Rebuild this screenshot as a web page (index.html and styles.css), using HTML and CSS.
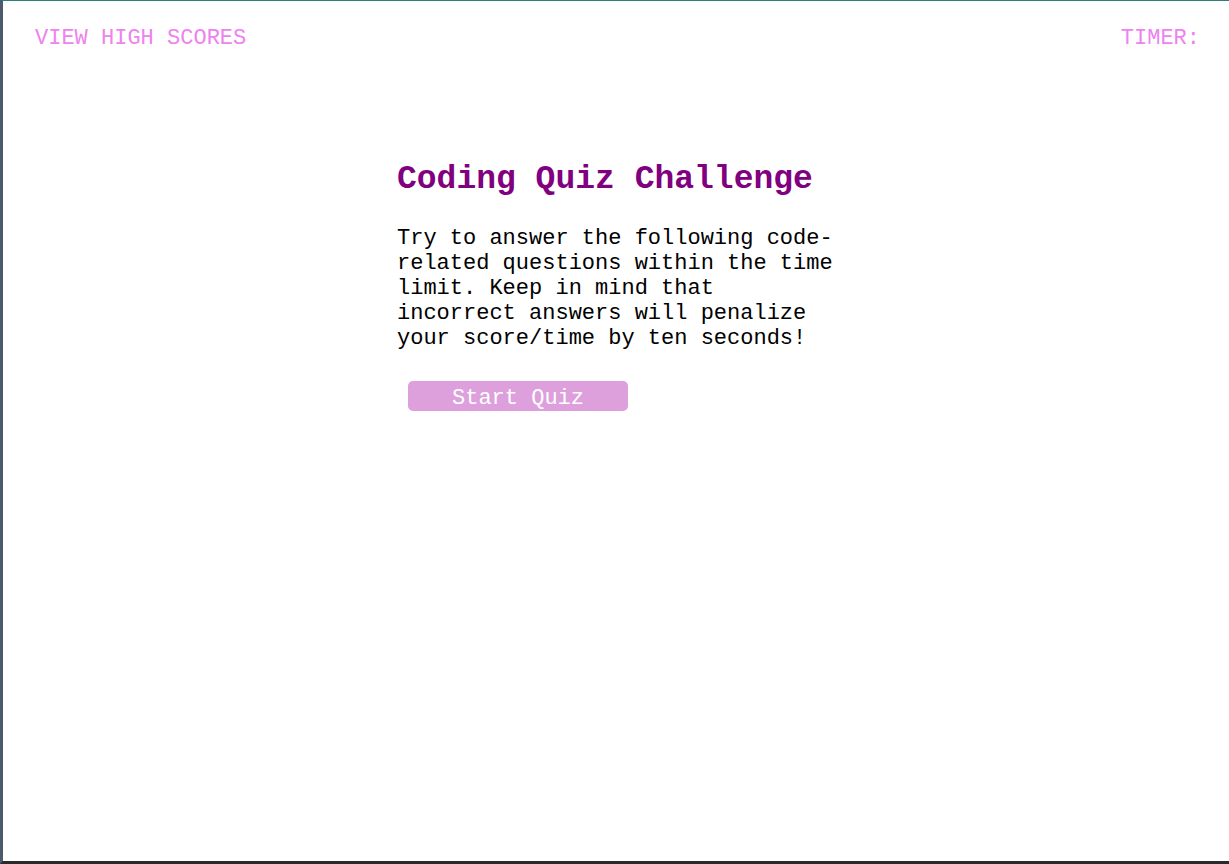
FILE: index.html
```html
<!DOCTYPE html>
<html lang="en">
<head>
<meta charset="utf-8">
<title>Coding Quiz Challenge</title>
<link rel="stylesheet" href="styles.css">
</head>
<body>
<div class="frame">
  <header class="topbar">
    <a class="highscores" href="#">VIEW HIGH SCORES</a>
    <div class="timer">TIMER:</div>
  </header>
  <main class="quiz">
    <h1 class="title">Coding Quiz Challenge</h1>
    <p class="intro">Try to answer the following code-related questions within the time limit. Keep in mind that incorrect answers will penalize your score/time by ten seconds!</p>
    <button class="start">Start Quiz</button>
  </main>
</div>
</body>
</html>
```
FILE: styles.css
```css
* { box-sizing: border-box; }
html, body { margin: 0; padding: 0; height: 100%; background: #fff; }
.frame {
  height: 100vh;
  border-top: 1px solid #2e7d7d;
  border-left: 3px solid #4b5b69;
  border-bottom: 3px solid #2a2a2a;
  font-family: "Liberation Mono", "Courier New", monospace;
  display: flex;
  flex-direction: column;
}
.topbar {
  display: flex;
  justify-content: space-between;
  padding: 25px 29px 0 32px;
  font-size: 22px;
  line-height: 25px;
}
.highscores, .timer {
  color: #ee82ee;
  text-decoration: none;
}
.quiz {
  width: 438px;
  margin: 110px auto 0;
  display: flex;
  flex-direction: column;
  align-items: flex-start;
}
.title {
  margin: 0;
  font-size: 33px;
  line-height: 38px;
  font-weight: bold;
  color: #800080;
}
.intro {
  margin: 27px 0 0;
  font-size: 22px;
  line-height: 25px;
  color: #000;
}
.start {
  margin: 30px 0 0 11px;
  width: 220px;
  height: 30px;
  padding: 5px 0 0;
  border: none;
  border-radius: 5px;
  background: #dda0dd;
  color: #fff;
  font-family: inherit;
  font-size: 22px;
  line-height: 25px;
  font-weight: normal;
}
```
